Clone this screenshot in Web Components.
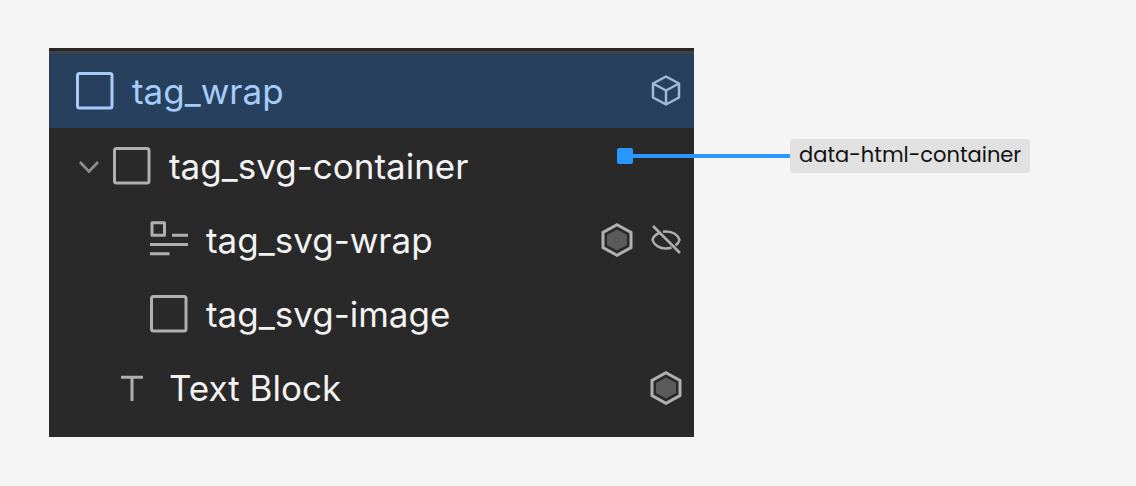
<!DOCTYPE html>
<html lang="en">
<head>
<meta charset="utf-8">
<meta name="viewport" content="width=device-width, initial-scale=1">
<title>Navigator</title>
<style>
  body { margin: 0; background: #f5f5f5; font-family: Inter, "Liberation Sans", sans-serif; }
</style>
</head>
<body>
<annotated-stage>
  <nav-panel>
    <nav-row level="0" icon="box" status="cube" selected>tag_wrap</nav-row>
    <nav-row level="0" icon="box" expandable>tag_svg-container</nav-row>
    <nav-row level="2" icon="embed" status="hex hidden">tag_svg-wrap</nav-row>
    <nav-row level="2" icon="box">tag_svg-image</nav-row>
    <nav-row level="1" icon="text" status="hex">Text Block</nav-row>
  </nav-panel>
  <call-out slot="note">data-html-container</call-out>
</annotated-stage>
<script>
const define = (name, render, setup) => customElements.define(name, class extends HTMLElement {
  connectedCallback() {
    if (this.shadowRoot) return;
    this.attachShadow({ mode: 'open' }).innerHTML = render(this);
    if (setup) setup(this);
  }
});

const shapes = {
  box: '<rect x="1.5" y="1.5" width="34.5" height="34.5" rx="2" stroke-width="3"/>',
  embed: '<path d="M2 1.800h12.500v12.500H2z" stroke-width="3" stroke-linejoin="round"/><path d="M22 14.300h16M0 23.500h38M0 32.800h19.500" stroke-width="3"/>',
  text: '<path d="M8 8.200h22M19 8.200v23.800" stroke-width="3"/>',
  chevron: '<path d="M4 15l9 9.500 9-9.500" stroke-width="2.600" stroke="#8e8e8e"/>',
  cube: '<path d="M16 2.500l13 7v14l-13 7-13-7v-14zM3 9.500l13 7 13-7M16 16.500v14" stroke-width="2.500" stroke-linejoin="round"/>',
  hex: '<path d="M16 1.700l14 7.700v15.200l-14 7.700-14-7.700V9.400z" stroke-width="3"/><path d="M16 6.500l10 5.500v10l-10 5.500-10-5.500V12z" fill="#5b5b5b" stroke="none"/>',
  hidden: '<path d="M3 3l27 27" stroke-width="2.500"/><path d="M10.500 9.500C6 11 3 14.500 2.500 17c1.500 5 7 8.500 13.500 8.500 2 0 4-.4 5.500-1M13 8.700c1-.2 2-.2 3-.2 7 0 12 3.500 13.500 8.500-.6 2-2 4-4 5.500" stroke-width="2.500"/>'
};

define('nav-icon', el => {
  const name = el.getAttribute('name');
  const wide = ['box', 'embed', 'text', 'chevron'].includes(name);
  const size = wide ? 38 : 32;
  const tall = wide ? 38 : 34;
  return `<style>
    :host { display: block; flex: none; }
    svg { display: block; fill: none; stroke: currentColor; }
  </style>
  <svg width="${size}" height="${tall}" viewBox="0 0 ${size} ${tall}" aria-hidden="true">${shapes[name]}</svg>`;
});

define('nav-row', el => {
  const status = (el.getAttribute('status') || '').split(' ').filter(Boolean);
  const labels = { cube: 'Component', hex: 'Bound property', hidden: 'Show element' };
  return `<style>
    :host { display: flex; align-items: center; height: 74px; padding: 0 12px 0 27px; color: #f2f2f2; --icon: #b0b0b0; }
    :host([level="1"]) { padding-left: 64px; }
    :host([level="2"]) { padding-left: 101px; }
    :host([selected]) { background: #26405d; color: #a6cdfa; --icon: #a9cbfb; --status: #a3b9d6; }
    nav-icon { color: var(--icon); }
    .status nav-icon { color: var(--status, #b0b0b0); }
    .name { flex: 1; min-width: 0; margin-left: 18px; font-size: 35px; line-height: 44px; white-space: nowrap; }
    .status { display: flex; gap: 17px; }
    button { display: block; width: 32px; padding: 0; border: 0; background: none; cursor: pointer; }
    .toggle { width: 37px; }
  </style>
  ${el.hasAttribute('expandable') ? '<button class="toggle" aria-label="Collapse" aria-expanded="true"><nav-icon name="chevron"></nav-icon></button>' : ''}
  <nav-icon name="${el.getAttribute('icon')}"></nav-icon>
  <span class="name"><slot></slot></span>
  <span class="status">${status.map(s => `<button aria-label="${labels[s]}"><nav-icon name="${s}"></nav-icon></button>`).join('')}</span>`;
}, el => {
  el.setAttribute('role', 'treeitem');
  el.setAttribute('aria-level', Number(el.getAttribute('level')) + 1);
});

define('nav-panel', () => `<style>
    :host { display: block; min-width: 0; padding-bottom: 12px; background: #292929; border-top: 3px solid #2b2728; }
    .tree { border-top: 3px solid #3f4347; }
    ::slotted([expandable]) { margin-top: 1px; }
  </style>
  <div class="tree" role="tree" aria-label="Elements"><slot></slot></div>`);

define('call-out', () => `<style>
    :host { display: flex; align-items: center; }
    .anchor { flex: none; width: 16px; height: 16px; border-radius: 2px; background: #2997fd; }
    .line { flex: none; width: 157px; height: 4px; background: #2997fd; }
    .label { padding: 0 9px 2px; border-radius: 3px; background: #e1e1e1; color: #111; font-family: Poppins, Inter, sans-serif; font-size: 21px; line-height: 32px; white-space: nowrap; }
  </style>
  <span class="anchor"></span><span class="line"></span><span class="label"><slot></slot></span>`);

define('annotated-stage', () => `<style>
    :host { display: grid; grid-template-columns: minmax(0, 645fr) minmax(0, 393fr); align-items: start; padding: 48px 49px; }
    .note { position: relative; margin: 91px 0 0 -77px; }
  </style>
  <slot></slot>
  <div class="note"><slot name="note"></slot></div>`);
</script>
</body>
</html>
